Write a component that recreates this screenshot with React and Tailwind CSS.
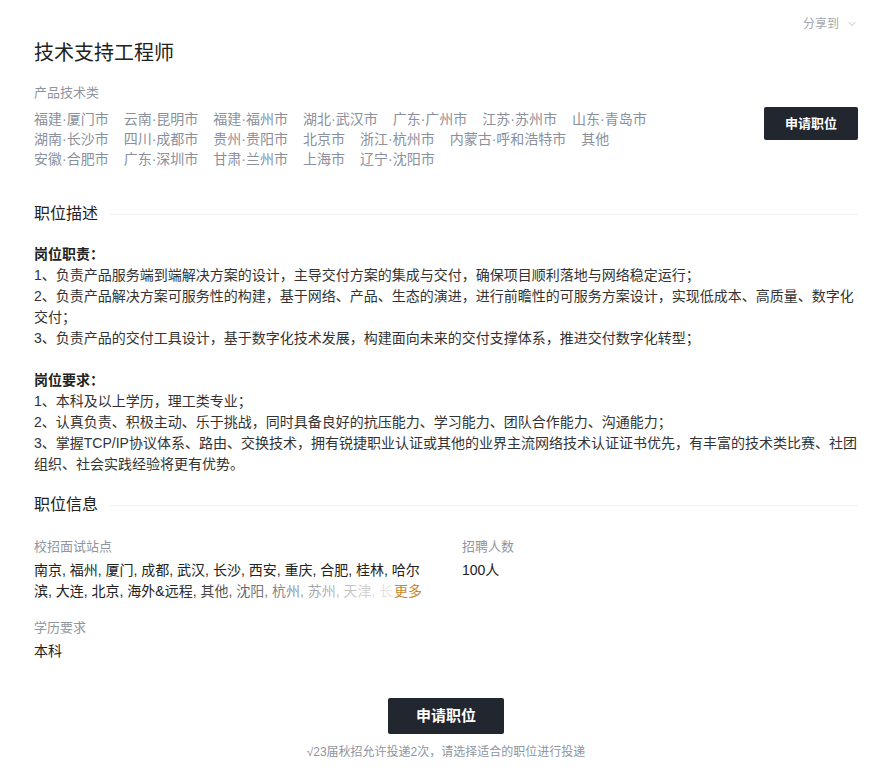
import { ChevronDown } from 'lucide-react';

const cities = [
  ['福建·厦门市', '云南·昆明市', '福建·福州市', '湖北·武汉市', '广东·广州市', '江苏·苏州市', '山东·青岛市'],
  ['湖南·长沙市', '四川·成都市', '贵州·贵阳市', '北京市', '浙江·杭州市', '内蒙古·呼和浩特市', '其他'],
  ['安徽·合肥市', '广东·深圳市', '甘肃·兰州市', '上海市', '辽宁·沈阳市'],
];

const sites = '南京, 福州, 厦门, 成都, 武汉, 长沙, 西安, 重庆, 合肥, 桂林, 哈尔滨, 大连, 北京, 海外&远程, 其他, 沈阳, 杭州, 苏州, 天津, 长春, 济南, 郑州, 昆明, 兰州';

function SectionTitle({ children }) {
  return (
    <div className="flex items-center gap-3">
      <h2 className="text-[16px] leading-6 text-[#222]">{children}</h2>
      <div className="flex-1 h-px bg-[#eff1f4]" />
    </div>
  );
}

export default function App() {
  return (
    <div
      className="w-[888px] min-h-[780px] bg-white pl-[34px] pr-[30px] pt-4 text-[#333]"
      style={{ fontFamily: '"Liberation Sans", "Noto Sans CJK SC", sans-serif' }}
    >
      <div className="flex justify-end">
        <button className="flex items-center gap-[7px] text-[12px] leading-4 text-[#a3a8b0]">
          分享到
          <ChevronDown size={12} strokeWidth={1.5} />
        </button>
      </div>

      <div className="flex items-start justify-between">
        <div>
          <h1 className="mt-[7px] text-[20px] leading-7 text-[#222]">技术支持工程师</h1>
          <div className="mt-4 text-[13px] leading-5 text-[#8f96a0]">产品技术类</div>
          <div className="mt-[6px] text-[14px] leading-5 text-[#8a909c]">
            {cities.map((row, i) => (
              <div key={i} className="flex">
                {row.map((c) => (
                  <span key={c} className="mr-[15px]">{c}</span>
                ))}
              </div>
            ))}
          </div>
        </div>
        <button className="mt-[75px] w-[94px] h-[33px] rounded-[2px] bg-[#22262e] text-white text-[13px] font-bold">
          申请职位
        </button>
      </div>

      <div className="mt-[33px]">
        <SectionTitle>职位描述</SectionTitle>
      </div>

      <div className="mt-[18px] text-[14px] leading-[21px] text-[#333]">
        <div className="font-bold text-[#222]">岗位职责：</div>
        <div>1、负责产品服务端到端解决方案的设计，主导交付方案的集成与交付，确保项目顺利落地与网络稳定运行；</div>
        <div>2、负责产品解决方案可服务性的构建，基于网络、产品、生态的演进，进行前瞻性的可服务方案设计，实现低成本、高质量、数字化交付；</div>
        <div>3、负责产品的交付工具设计，基于数字化技术发展，构建面向未来的交付支撑体系，推进交付数字化转型；</div>
        <div className="h-[21px]" />
        <div className="font-bold text-[#222]">岗位要求：</div>
        <div>1、本科及以上学历，理工类专业；</div>
        <div>2、认真负责、积极主动、乐于挑战，同时具备良好的抗压能力、学习能力、团队合作能力、沟通能力；</div>
        <div>3、掌握TCP/IP协议体系、路由、交换技术，拥有锐捷职业认证或其他的业界主流网络技术认证证书优先，有丰富的技术类比赛、社团组织、社会实践经验将更有优势。</div>
      </div>

      <div className="mt-[18px]">
        <SectionTitle>职位信息</SectionTitle>
      </div>

      <div className="mt-5 flex">
        <div className="w-[428px]">
          <div className="text-[13px] leading-5 text-[#8f96a0]">校招面试站点</div>
          <div className="relative mt-[3px] w-[388px]">
            <p className="text-[14px] leading-[21px] text-[#222] line-clamp-2">{sites}</p>
            <div className="absolute right-0 bottom-0 flex h-[21px]">
              <div className="w-[230px] bg-linear-to-r from-white/0 to-white/90" />
              <span className="bg-white text-[14px] leading-[21px] text-[#c8892a] cursor-pointer">更多</span>
            </div>
          </div>
          <div className="mt-4 text-[13px] leading-5 text-[#8f96a0]">学历要求</div>
          <div className="mt-[3px] text-[14px] leading-[21px] text-[#222]">本科</div>
        </div>
        <div>
          <div className="text-[13px] leading-5 text-[#8f96a0]">招聘人数</div>
          <div className="mt-[3px] text-[14px] leading-[21px] text-[#222]">100人</div>
        </div>
      </div>

      <div className="mt-9 flex flex-col items-center">
        <button className="w-[116px] h-9 rounded-[2px] bg-[#22262e] text-white text-[15px] font-bold">
          申请职位
        </button>
        <div className="mt-[10px] text-[12px] leading-4 text-[#8f96a0]">√23届秋招允许投递2次，请选择适合的职位进行投递</div>
      </div>
    </div>
  );
}
